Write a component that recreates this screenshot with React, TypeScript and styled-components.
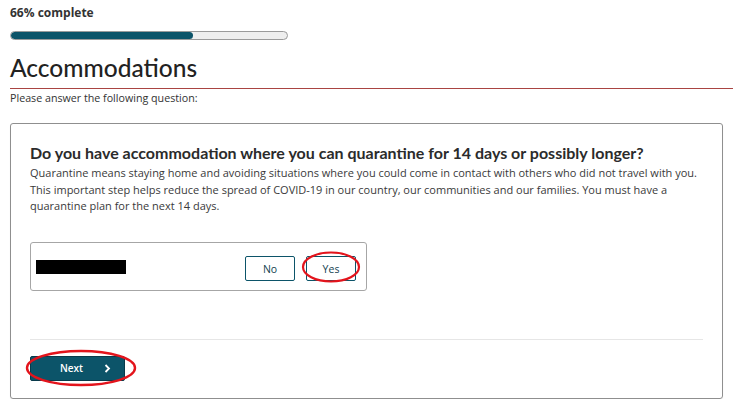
import React from "react";
import styled, { createGlobalStyle } from "styled-components";

const GlobalStyle = createGlobalStyle`
  html, body { margin: 0; padding: 0; background: #fff; }
  body { font-family: "Open Sans", "Liberation Sans", sans-serif; color: #333; }
  * { box-sizing: border-box; }
`;

const Page = styled.div`
  padding: 5px 20px 0 10px;
  width: 743px;
`;

const ProgressLabel = styled.div`
  font-family: "Open Sans", sans-serif;
  font-weight: 700;
  font-size: 12px;
  line-height: 16px;
  color: #333;
`;

const ProgressTrack = styled.div`
  margin-top: 10px;
  width: 278px;
  height: 9px;
  border: 1px solid #9a9a9a;
  border-radius: 5px;
  background: #eeeeee;
  overflow: hidden;
`;

const ProgressFill = styled.div`
  height: 100%;
  background: #0c5469;
  border-radius: 4px;
`;

const Title = styled.h1`
  margin: 13px -10px 0 0;
  padding-bottom: 5px;
  border-bottom: 1px solid #a94442;
  font-family: Lato, sans-serif;
  font-weight: 500;
  font-size: 24.5px;
  line-height: 30px;
  color: #222;
`;

const Intro = styled.p`
  margin: 2px 0 0;
  font-size: 10.7px;
  line-height: 14px;
  color: #333;
`;

const Card = styled.section`
  margin-top: 18px;
  width: 713px;
  border: 1px solid #8f8f8f;
  border-radius: 3px;
  padding: 19px 19px 17px 19px;
  box-shadow: 0 1px 1px rgba(0, 0, 0, 0.08);
`;

const Question = styled.h2`
  margin: 0;
  font-family: Lato, sans-serif;
  font-weight: 700;
  font-size: 16px;
  line-height: 20px;
  color: #2b2b2b;
`;

const Description = styled.p`
  margin: 2px 0 0;
  font-size: 11px;
  line-height: 16.5px;
  color: #3a3a3a;
`;

const AnswerBox = styled.div`
  margin-top: 27px;
  width: 337px;
  height: 49px;
  border: 1px solid #a6a6a6;
  border-radius: 3px;
  display: flex;
  align-items: center;
  padding: 11px 10px 6px 5px;
`;

const Redacted = styled.div`
  width: 90px;
  height: 14px;
  background: #000;
  margin-bottom: 4px;
`;

const Choices = styled.div`
  margin-left: auto;
  display: flex;
  gap: 11px;
`;

const ChoiceButton = styled.button`
  position: relative;
  width: 50px;
  height: 25px;
  border: 1px solid #0c5469;
  border-radius: 2px;
  background: #fff;
  font-family: "Open Sans", sans-serif;
  font-size: 10.5px;
  color: #123f4f;
  padding: 0;
  cursor: pointer;
`;

const Divider = styled.hr`
  margin: 48px 0 0;
  border: 0;
  border-top: 1px solid #e6e6e6;
  height: 0;
`;

const NextButton = styled.button`
  position: relative;
  margin-top: 16px;
  width: 95px;
  height: 25px;
  background: #0c5469;
  border: 1px solid #083a4a;
  border-radius: 2px;
  color: #fff;
  font-family: "Open Sans", sans-serif;
  font-weight: 600;
  font-size: 10px;
  display: flex;
  align-items: center;
  padding: 0 13px 0 29px;
  cursor: pointer;
`;

const NextLabel = styled.span`
  flex: 1;
  text-align: left;
`;

const Annotation = styled.svg`
  position: absolute;
  pointer-events: none;
  overflow: visible;
`;

export default function App() {
  const progress = 66;
  return (
    <>
      <GlobalStyle />
      <Page>
        <ProgressLabel>{progress}% complete</ProgressLabel>
        <ProgressTrack>
          <ProgressFill style={{ width: `${progress}%` }} />
        </ProgressTrack>
        <Title>Accommodations</Title>
        <Intro>Please answer the following question:</Intro>
        <Card>
          <Question>
            Do you have accommodation where you can quarantine for 14 days or possibly longer?
          </Question>
          <Description>
            Quarantine means staying home and avoiding situations where you could come in contact with
            others who did not travel with you. This important step helps reduce the spread of COVID-19
            in our country, our communities and our families. You must have a quarantine plan for the
            next 14 days.
          </Description>
          <AnswerBox>
            <Redacted />
            <Choices>
              <ChoiceButton>No</ChoiceButton>
              <ChoiceButton>
                Yes
                <Annotation
                  width="62"
                  height="34"
                  viewBox="0 0 62 34"
                  style={{ left: -6, top: -7 }}
                >
                  <ellipse cx="30" cy="17" rx="28" ry="14.5" fill="none" stroke="#e3141c" strokeWidth="2.2" />
                </Annotation>
              </ChoiceButton>
            </Choices>
          </AnswerBox>
          <Divider />
          <NextButton>
            <NextLabel>Next</NextLabel>
            <svg width="7" height="9" viewBox="0 0 7 9">
              <path d="M1.5 1 L5 4.5 L1.5 8" fill="none" stroke="#fff" strokeWidth="1.8" />
            </svg>
            <Annotation
              width="114"
              height="40"
              viewBox="0 0 114 40"
              style={{ left: -7, top: -9 }}
            >
              <ellipse cx="57" cy="20" rx="54" ry="17" fill="none" stroke="#e3141c" strokeWidth="2.4" />
            </Annotation>
          </NextButton>
        </Card>
      </Page>
    </>
  );
}
